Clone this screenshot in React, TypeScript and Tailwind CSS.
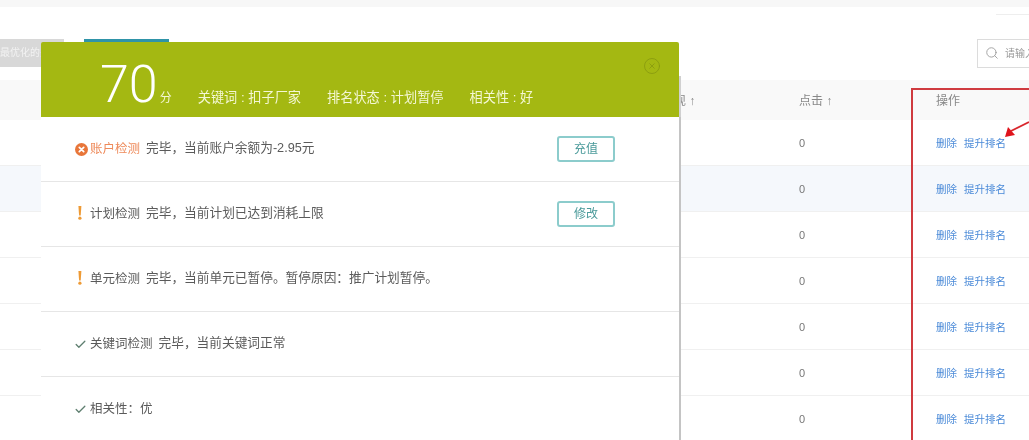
import { Check, CircleX, Search } from "lucide-react";

const FONT = "font-['Liberation_Sans','Noto_Sans_CJK_SC',sans-serif]";

function XBadge() {
  return (
    <svg width="13" height="13" viewBox="0 0 13 13" className="shrink-0">
      <circle cx="6.5" cy="6.5" r="6.5" fill="#e8763a" />
      <path d="M4.3 4.3l4.4 4.4M8.7 4.3l-4.4 4.4" stroke="#fff" strokeWidth="1.7" strokeLinecap="round" />
    </svg>
  );
}

function Bang() {
  return (
    <svg width="12" height="16" viewBox="0 0 12 16" className="-ml-[1px] -mt-[2px] shrink-0">
      <path d="M4.4 1h3L6.7 10.5H5.1z" fill="#ee9a35" />
      <circle cx="5.9" cy="13.2" r="1.6" fill="#ee9a35" />
    </svg>
  );
}

function Tick() {
  return <Check className="-ml-[1px] h-[13px] w-[13px] shrink-0 text-[#5f7f70]" strokeWidth={2.4} />;
}

function CheckRow({ icon, label, labelClass, text, action }: { icon: React.ReactNode; label: string; labelClass?: string; text: string; action?: string }) {
  return (
    <div className="flex h-[65px] shrink-0 items-center border-b border-[#e6e6e6] pl-[34px] pr-[64px]">
      <div className="w-[15px]">{icon}</div>
      <span className={`text-[12.5px] ${labelClass ?? "text-[#5a5a5a]"}`}>{label}</span>
      <span className="ml-[6px] text-[12.7px] text-[#5a5a5a]">{text}</span>
      {action && (
        <button className="ml-auto h-[26px] w-[58px] rounded-[3px] border-2 border-[#8ccccc] text-[12px] text-[#4a9a9a]">
          {action}
        </button>
      )}
    </div>
  );
}

function ScoreModal() {
  return (
    <div className="absolute left-[41px] top-[42px] flex w-[640px] flex-col">
      <div className="relative flex h-[75px] w-[638px] items-end rounded-t-[2px] bg-[#a4b812] pb-[11px] pl-[59px] text-[#f4f7d4]">
        <span className="-mb-[5px] font-['Roboto',sans-serif] text-[52px] leading-[52px] font-light text-white">70</span>
        <span className="ml-[2px] text-[12px] leading-[16px]">分</span>
        <span className="ml-[26px] text-[13.2px] leading-[16px]">关键词 : 扣子厂家</span>
        <span className="ml-[26px] text-[13.2px] leading-[16px]">排名状态 : 计划暂停</span>
        <span className="ml-[26px] text-[13.2px] leading-[16px]">相关性 : 好</span>
        <CircleX className="absolute right-[18px] top-[15px] h-[18px] w-[18px] text-[#8a9c10]" strokeWidth={1.2} />
        <div className="absolute left-full top-[34px] h-[41px] w-[2px] bg-[#d0d0d0]" />
      </div>
      <div className="flex flex-col border-r-2 border-[#c4c4c4] bg-white">
        <CheckRow icon={<XBadge />} label="账户检测" labelClass="text-[#ee8a5a]" text="完毕，当前账户余额为-2.95元" action="充值" />
        <CheckRow icon={<Bang />} label="计划检测" text="完毕，当前计划已达到消耗上限" action="修改" />
        <CheckRow icon={<Bang />} label="单元检测" text="完毕，当前单元已暂停。暂停原因：推广计划暂停。" />
        <CheckRow icon={<Tick />} label="关键词检测" text="完毕，当前关键词正常" />
        <CheckRow icon={<Tick />} label="相关性：优" text="" />
      </div>
    </div>
  );
}

function TableRow({ alt }: { alt?: boolean }) {
  return (
    <div className={`grid h-[46px] shrink-0 grid-cols-[662px_137px_137px_1fr] items-center border-b border-[#f0f0f0] text-[11px] ${alt ? "bg-[#f5f8fc]" : "bg-white"}`}>
      <span />
      <span />
      <span className="pt-[1px] text-[#777]">0</span>
      <span className="whitespace-nowrap pt-[2px] text-[10.5px] text-[#4a8ad8]">
        删除<span className="ml-[7px]">提升排名</span>
      </span>
    </div>
  );
}

export default function App() {
  return (
    <div className={`relative h-[440px] w-[1029px] overflow-hidden bg-white blur-[0.5px] ${FONT}`}>
      <div className="h-[7px] bg-[#f7f7f7]" />
      <div className="absolute right-0 top-[14px] h-[1px] w-[33px] bg-[#eeeeee]" />
      <div className="flex h-[73px] items-start pt-[32px]">
        <div className="h-[28px] w-[64px] overflow-hidden whitespace-nowrap bg-[#d8d8d8] text-[10px] leading-[28px] text-[#f2f2f2]">
          最优化的关键词
        </div>
        <div className="ml-[20px] h-[28px] w-[85px] border-t-[3px] border-[#2f94a8]" />
        <div className="ml-auto flex h-[29px] w-[52px] items-center gap-[6px] overflow-hidden whitespace-nowrap border border-r-0 border-[#dcdcdc] pl-[7px] text-[10px] text-[#999]">
          <Search className="-mt-[2px] h-[14px] w-[14px] shrink-0 text-[#999]" strokeWidth={1.5} />
          请输入关键词
        </div>
      </div>
      <div className="grid h-[40px] grid-cols-[662px_137px_137px_1fr] items-center bg-[#f9f9f9] pt-[2px] text-[12px] text-[#888]">
        <span />
        <span>展现 ↑</span>
        <span>点击 ↑</span>
        <span>操作</span>
      </div>
      <div className="flex flex-col">
        <TableRow />
        <TableRow alt />
        <TableRow />
        <TableRow />
        <TableRow />
        <TableRow />
        <TableRow />
      </div>

      <ScoreModal />

      <div className="absolute left-[911px] top-[88px] h-[360px] w-[130px] border-2 border-[#cf3a3f]" />
      <svg className="absolute left-[1000px] top-[118px]" width="29" height="22" viewBox="0 0 29 22">
        <path d="M29 4L11 13" stroke="#d9262c" strokeWidth="1.8" />
        <path d="M5 19L8 9l7 8z" fill="#e0141c" />
      </svg>
    </div>
  );
}
